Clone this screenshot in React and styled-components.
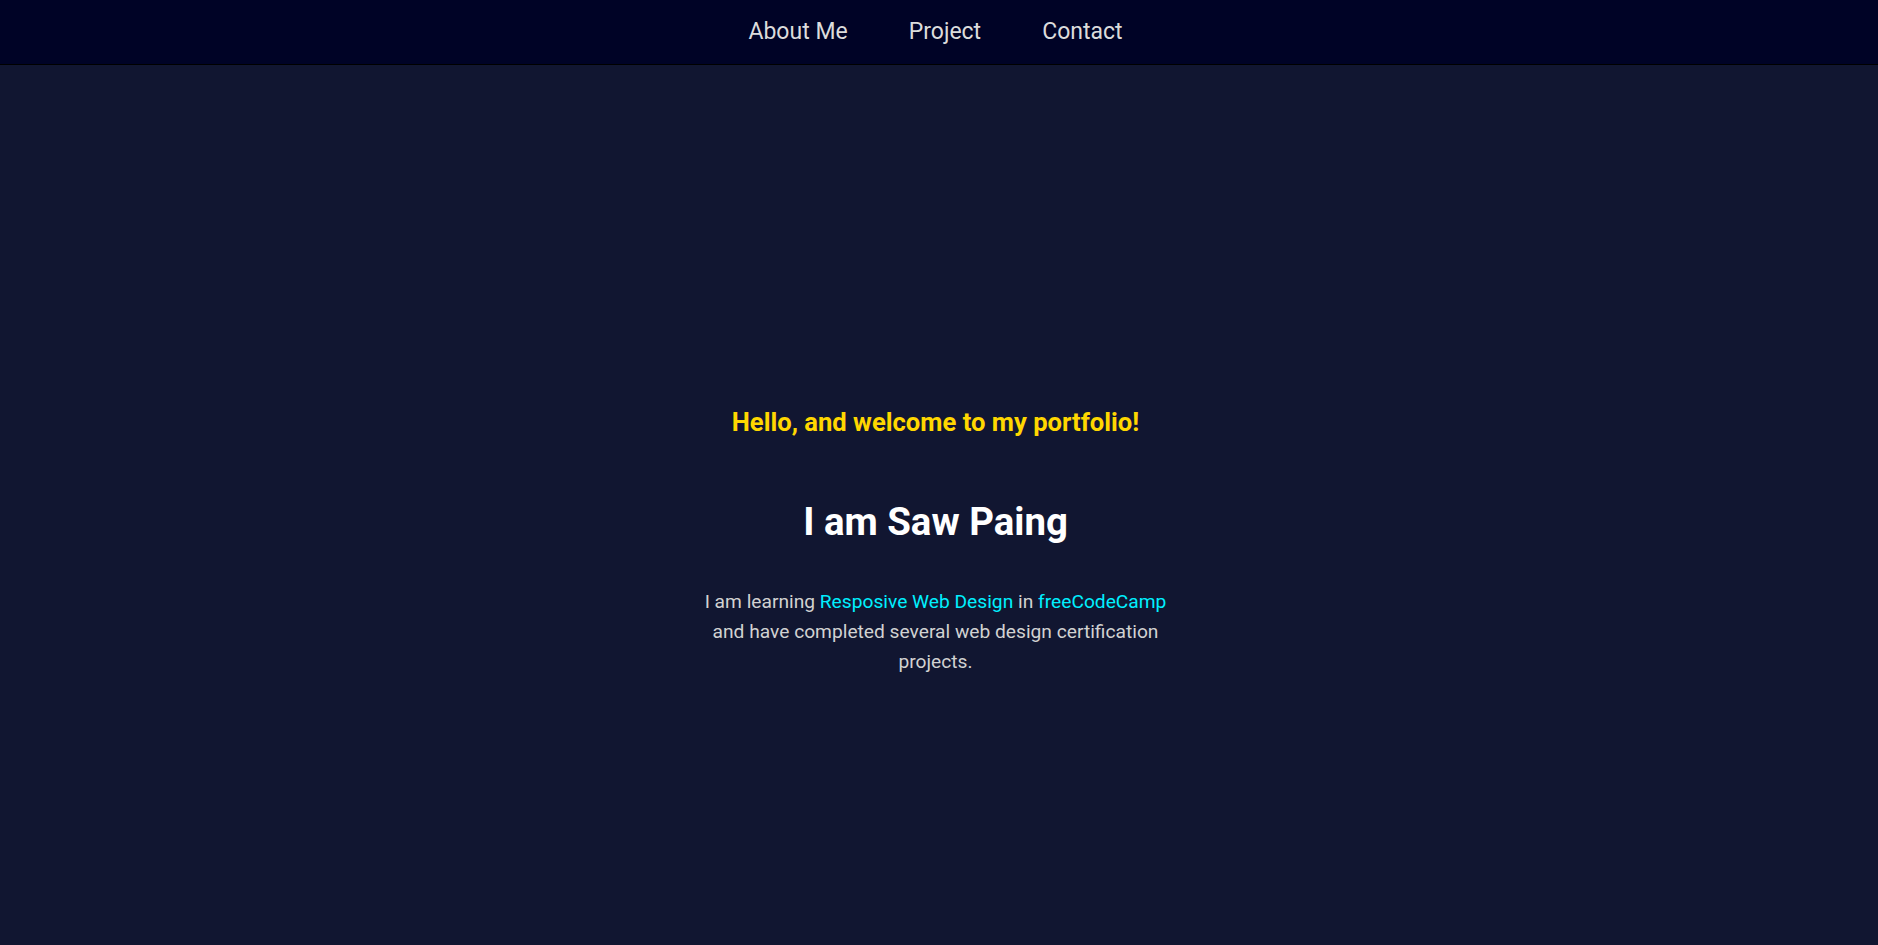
import React from "react";
import styled, { createGlobalStyle } from "styled-components";

const GlobalStyle = createGlobalStyle`
  * {
    box-sizing: border-box;
  }
  body {
    margin: 0;
    background: #111631;
    font-family: Roboto, "Liberation Sans", sans-serif;
    overflow: hidden;
  }
`;

export default function App() {
  return (
    <>
      <GlobalStyle />
      <NavBar>
        <NavList>
          <NavItem href="#about">About Me</NavItem>
          <NavItem href="#project">Project</NavItem>
          <NavItem href="#contact">Contact</NavItem>
        </NavList>
      </NavBar>
      <Welcome id="about">
        <Greeting>Hello, and welcome to my portfolio!</Greeting>
        <Name>I am Saw Paing</Name>
        <Intro>
          I am learning <Highlight href="#">Resposive Web Design</Highlight> in{" "}
          <Highlight href="#">freeCodeCamp</Highlight> and have completed several web
          design certification projects.
        </Intro>
      </Welcome>
    </>
  );
}

const NavBar = styled.nav`
  height: 65px;
  background: #000326;
  border-bottom: 1px solid #000000;
  display: flex;
  justify-content: center;
  align-items: center;
  padding: 0 7px 2px 0;
`;

const NavList = styled.div`
  display: flex;
  gap: 61px;
`;

const NavItem = styled.a`
  color: #dcdcdc;
  font-size: 23px;
  text-decoration: none;
  line-height: 1;
`;

const Welcome = styled.section`
  height: calc(100vh - 65px);
  display: flex;
  flex-direction: column;
  align-items: center;
  justify-content: center;
  text-align: center;
  padding: 74px 7px 0 0;
`;

const Greeting = styled.h2`
  margin: 0 0 61px;
  color: #ffd700;
  font-size: 1.6rem;
  font-weight: 700;
  line-height: 1.2;
`;

const Name = styled.h1`
  margin: 0 0 42px;
  color: #ffffff;
  font-size: 2.4rem;
  font-weight: 700;
  line-height: 1.2;
`;

const Intro = styled.p`
  margin: 0;
  max-width: 480px;
  color: #d2d2d2;
  font-size: 1.2rem;
  line-height: 30px;
`;

const Highlight = styled.a`
  color: #00f0ff;
  text-decoration: none;
`;
